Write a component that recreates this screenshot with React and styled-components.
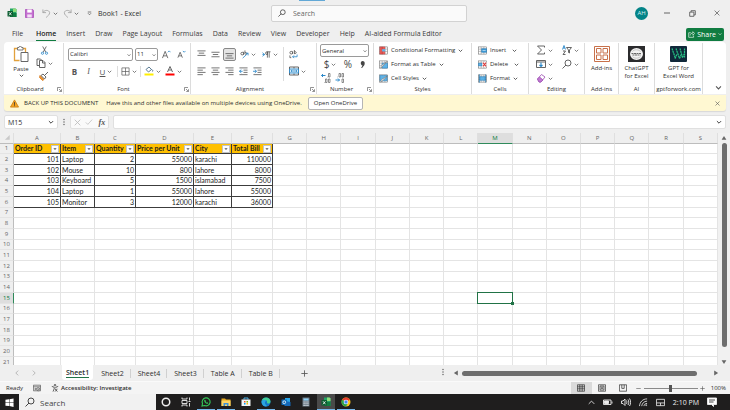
import React, { useState } from 'react';
import styled, { createGlobalStyle, css } from 'styled-components';

const GlobalStyle = createGlobalStyle`
  * {
    box-sizing: border-box;
  }
  body {
    margin: 0;
    background: #efefef;
    color: #2e2e2e;
    font-family: 'Open Sans', 'Noto Sans', sans-serif;
    font-size: 7px;
  }
  button, input, select {
    font: inherit;
    color: inherit;
    margin: 0;
    padding: 0;
    border: 0;
    background: none;
    border-radius: 0;
  }
`;

const HEADERS = ['Order ID', 'Item', 'Quantity', 'Price per Unit', 'City', 'Total Bill'];

const ORDERS = [
    [101, 'Laptop', 2, 55000, 'karachi', 110000],
    [102, 'Mouse', 10, 800, 'lahore', 8000],
    [103, 'Keyboard', 5, 1500, 'islamabad', 7500],
    [104, 'Laptop', 1, 55000, 'lahore', 55000],
    [105, 'Monitor', 3, 12000, 'karachi', 36000],
];

const COLUMNS = 'ABCDEFGHIJKLMNOPQRS'.split('');
const COLUMN_WIDTHS = [47, 34, 41, 58, 38, 41];
const ROWS = Array.from({ length: 21 }, (_, i) => i + 1);
const ACTIVE = { column: 'M', row: 15 };

const MENU = ['File', 'Home', 'Insert', 'Draw', 'Page Layout', 'Formulas', 'Data', 'Review', 'View', 'Developer', 'Help', 'AI-aided Formula Editor'];
const SHEETS = ['Sheet1', 'Sheet2', 'Sheet4', 'Sheet3', 'Table A', 'Table B'];

/* ---------- shell ---------- */

const Window = styled.div`
  height: 100vh;
  display: flex;
  flex-direction: column;
  overflow: hidden;
`;

const TitleBar = styled.header`
  display: grid;
  grid-template-columns: 271px 1fr 263px;
  align-items: center;
  height: 26px;
  flex: none;
  position: relative;

  &::before {
    content: '';
    position: absolute;
    top: 0;
    left: 41%;
    width: 26px;
    height: 1px;
    background: #62a8d6;
  }
`;

const Cluster = styled.div`
  display: flex;
  align-items: center;
  justify-content: ${(p) => p.$justify || 'flex-start'};
  gap: ${(p) => p.$gap || 0}px;
  padding: ${(p) => p.$pad || '0'};
`;

const IconButton = styled.button`
  display: inline-flex;
  align-items: center;
  justify-content: center;
  gap: 2px;
  flex: none;
  min-width: ${(p) => p.$w || 12}px;
  height: ${(p) => p.$h || 12}px;
  color: ${(p) => p.$color || '#555'};
  ${(p) => p.$boxed && css`
    background: #e4e4e4;
    border: 1px solid #888;
    border-radius: 2px;
  `}
`;

const DocTitle = styled.span`
  white-space: nowrap;
`;

const TitleSearch = styled.label`
  display: flex;
  align-items: center;
  gap: 7px;
  height: 17px;
  padding: 0 6px;
  background: #fafafa;
  border: 1px solid #d2d2d2;
  border-radius: 2px;
  input {
    flex: 1;
    outline: none;
  }
  input::placeholder {
    color: #666;
  }
`;

const Avatar = styled.button`
  width: 13px;
  height: 13px;
  border-radius: 50%;
  background: #038387;
  color: #d8f0f0;
  font-size: 6px;
  line-height: 13px;
`;

const MenuBar = styled.nav`
  display: flex;
  align-items: center;
  gap: 10px;
  height: 16px;
  flex: none;
  padding: 0 6px 0 12px;
`;

const MenuLink = styled.a`
  color: #3b3b3b;
  text-decoration: none;
  white-space: nowrap;
  line-height: 12px;
  border-bottom: 1px solid transparent;
  ${(p) => p.$active && css`
    font-weight: 600;
    color: #222;
    margin-left: 3px;
    border-color: #107c41;
  `}
`;

const ShareButton = styled.button`
  display: flex;
  align-items: center;
  gap: 2px;
  height: 13px;
  margin-left: auto;
  padding: 0 2px;
  border-radius: 2px;
  background: #107c41;
  color: #fff;
`;

/* ---------- ribbon ---------- */

const Ribbon = styled.section`
  display: flex;
  flex: none;
  height: 52px;
  margin: 0 4px;
  padding: 1px 0 0;
  background: #fff;
  border-radius: 4px 4px 0 0;
  font-size: 6px;
`;

const Group = styled.div`
  display: flex;
  flex-direction: column;
  flex: none;
  width: ${(p) => p.$width}px;
  border-right: 1px solid #dcdcdc;
`;

const GroupBody = styled.div`
  display: flex;
  flex: 1;
  gap: ${(p) => p.$gap || 0}px;
  padding: ${(p) => p.$pad || '0'};
`;

const GroupLabel = styled.div`
  display: flex;
  align-items: center;
  justify-content: center;
  height: 9px;
  line-height: 9px;
  white-space: nowrap;
  span {
    flex: 1;
    text-align: center;
  }
`;

const CollapseCorner = styled.div`
  flex: 1;
  display: flex;
  align-items: flex-end;
  justify-content: flex-end;
  padding: 0 2px 1px 0;
`;

const Stack = styled.div`
  display: flex;
  flex-direction: column;
  gap: ${(p) => p.$gap || 0}px;
`;

const Line = styled.div`
  display: flex;
  align-items: center;
  gap: ${(p) => p.$gap || 0}px;
  height: ${(p) => p.$h || 14}px;
`;

const Divider = styled.i`
  width: 1px;
  height: ${(p) => p.$h || 11}px;
  background: #dcdcdc;
`;

const BigButton = styled.button`
  display: flex;
  flex-direction: column;
  align-items: center;
  width: 100%;
  line-height: 8px;
  padding-top: 2px;
  white-space: nowrap;
  svg {
    margin-bottom: 2px;
  }
`;

const TextButton = styled.button`
  display: flex;
  align-items: center;
  gap: 3px;
  height: 14px;
  white-space: nowrap;
`;

const SelectBox = styled.span`
  position: relative;
  display: inline-flex;
  width: ${(p) => p.$width}px;
  height: 13px;
  border: 1px solid #9a9a9a;
  border-radius: 2px;
  select {
    appearance: none;
    width: 100%;
    padding: 0 1px;
    outline: none;
  }
  svg {
    position: absolute;
    right: 1px;
    top: 4px;
    pointer-events: none;
  }
`;

const Letter = styled.span`
  font-size: 8px;
  line-height: 9px;
  font-weight: ${(p) => (p.$bold ? 700 : 400)};
  font-style: ${(p) => (p.$italic ? 'italic' : 'normal')};
  font-family: ${(p) => (p.$italic ? "'Liberation Serif', serif" : 'inherit')};
  text-decoration: ${(p) => (p.$underline ? 'underline' : 'none')};
`;

const Symbol = styled.span`
  font-size: 10px;
  line-height: 12px;
  color: #444;
`;

/* ---------- message and formula bars ---------- */

const MessageBar = styled.div`
  display: flex;
  align-items: center;
  flex: none;
  height: 16px;
  margin: 1px 4px 0;
  padding: 0 6px;
  background: #fff8d2;
  border-radius: 0 0 3px 3px;
  box-shadow: 0 1px 1px #d8d8d8;
  font-size: 6px;
  strong {
    font-weight: 500;
    margin: 0 8px 0 5px;
  }
`;

const OutlineButton = styled.button`
  height: 13px;
  margin: 0 auto 0 6px;
  padding: 0 5px;
  background: #fff;
  border: 1px solid #b5b5b5;
  border-radius: 2px;
`;

const FormulaBar = styled.div`
  display: flex;
  align-items: center;
  flex: none;
  gap: 4px;
  padding: 4px;
`;

const Field = styled.label`
  display: flex;
  align-items: center;
  flex: ${(p) => (p.$width ? `0 0 ${p.$width}px` : 1)};
  min-width: 0;
  height: 14px;
  padding: 0 3px;
  background: #fff;
  border: 1px solid #e0e0e0;
  border-radius: 2px;
  input {
    flex: 1;
    min-width: 0;
    outline: none;
  }
`;

const FunctionButtons = styled.div`
  display: flex;
  align-items: center;
  justify-content: space-around;
  width: 39px;
  height: 14px;
  background: #fafafa;
  border: 1px solid #e0e0e0;
  border-radius: 2px;
`;

/* ---------- sheet ---------- */

const SheetArea = styled.main`
  display: flex;
  flex: 1;
  min-height: 0;
`;

const GridView = styled.div`
  flex: 1;
  overflow: hidden;
  background: #fff;
`;

const Grid = styled.table`
  width: 100%;
  table-layout: fixed;
  border-collapse: separate;
  border-spacing: 0;
  font-family: Lato, 'Open Sans', sans-serif;
  font-size: 7px;
  line-height: 9px;
  color: #1c1c1c;

  tbody tr {
    height: 11px;
  }
  tbody tr:nth-child(3n + 1) {
    height: 10px;
  }
`;

const ColumnHead = styled.th`
  height: 11px;
  padding: 0;
  font-weight: 400;
  font-family: 'Open Sans', sans-serif;
  font-size: 6px;
  color: ${(p) => (p.$active ? '#107c41' : '#666')};
  background: ${(p) => (p.$active ? '#dedede' : '#efefef')};
  border-right: 1px solid #dfdfdf;
  border-bottom: 1px solid ${(p) => (p.$active ? '#2f8a5b' : '#bdbdbd')};
`;

const RowHead = styled.th`
  padding: 0;
  font-weight: 400;
  font-family: 'Open Sans', sans-serif;
  font-size: 6px;
  color: ${(p) => (p.$active ? '#107c41' : '#666')};
  background: ${(p) => (p.$active ? '#dedede' : '#efefef')};
  border-right: 1px solid ${(p) => (p.$active ? '#2f8a5b' : '#bdbdbd')};
  border-bottom: 1px solid #e4e4e4;
`;

const Cell = styled.td`
  position: relative;
  padding: 0 1px;
  white-space: nowrap;
  text-align: ${(p) => (p.$number ? 'right' : 'left')};
  border-right: 1px solid #e4e4e4;
  border-bottom: 1px solid #e4e4e4;
  ${(p) => p.$filled && css`
    border-color: #3c3c3c;
  `}
  ${(p) => p.$heading && css`
    background: #ffc000;
    font-weight: 700;
  `}
`;

const HeadingInner = styled.div`
  display: flex;
  align-items: center;
  justify-content: space-between;
  height: 9px;
`;

const FilterButton = styled.button`
  display: flex;
  align-items: center;
  justify-content: center;
  flex: none;
  width: 8px;
  height: 8px;
  margin-left: -2px;
  background: #fdfdfd;
  border: 1px solid #c4c4c4;
`;

const Selection = styled.div`
  position: absolute;
  inset: -1px;
  border: 1px solid #217346;
  z-index: 1;
  &::after {
    content: '';
    position: absolute;
    right: -2px;
    bottom: -2px;
    width: 3px;
    height: 3px;
    background: #217346;
  }
`;

const VerticalScroll = styled.div`
  display: flex;
  flex-direction: column;
  align-items: center;
  justify-content: space-between;
  gap: 2px;
  width: 12px;
  padding: 2px 0 0;
  background: #f1f1f1;
`;

const VerticalThumb = styled.div`
  flex: 1;
  width: 5px;
  margin-bottom: 10px;
  border-radius: 3px;
  background: #6e6e6e;
`;

const SheetBar = styled.div`
  display: flex;
  align-items: center;
  flex: none;
  height: 17px;
  padding-right: 11px;
  background: #efefef;
  border-bottom: 1px solid #fafafa;
`;

const SheetNav = styled.div`
  display: flex;
  justify-content: center;
  gap: 5px;
  width: 62px;
  padding-right: 11px;
`;

const SheetTab = styled.button`
  height: 16px;
  padding: 0 7px;
  white-space: nowrap;
  position: relative;
  &::after {
    content: '';
    position: absolute;
    right: 0;
    top: 4px;
    height: 9px;
    border-right: 1px solid #d0d0d0;
  }
  ${(p) => p.$active && css`
    height: 15px;
    margin: 0 1px 2px 0;
    padding: 0 4px;
    background: #fff;
    border-radius: 0 0 3px 3px;
    font-weight: 600;
    &::after {
      left: 4px;
      right: 4px;
      top: auto;
      bottom: 2px;
      height: 1px;
      border: 0;
      background: #217346;
    }
  `}
`;

const NewSheet = styled.div`
  flex: 1;
  display: flex;
  justify-content: space-between;
  padding-left: 19px;
`;

const HorizontalScroll = styled.div`
  display: flex;
  align-items: center;
  gap: 3px;
  flex: none;
  width: 37%;
  margin-left: 8px;
`;

const HorizontalThumb = styled.div`
  flex: 1;
  height: 5px;
  margin-right: 13px;
  border-radius: 3px;
  background: #6e6e6e;
`;

const StatusBar = styled.footer`
  display: flex;
  align-items: center;
  flex: none;
  gap: 8px;
  height: 12px;
  padding: 0 4px 0 6px;
  background: #f4f4f4;
  font-size: 6px;
`;

const AccessButton = styled.button`
  display: flex;
  align-items: center;
  gap: 2px;
  font-weight: 600;
`;

const StatusRight = styled.div`
  display: flex;
  align-items: center;
  margin-left: auto;
`;

const ViewButton = styled.button`
  display: flex;
  align-items: center;
  justify-content: center;
  width: 21px;
  height: 12px;
  background: ${(p) => (p.$active ? '#dadada' : 'transparent')};
`;

const ZoomSlider = styled.input`
  appearance: none;
  width: 54px;
  height: 10px;
  background: linear-gradient(#8a8a8a, #8a8a8a) center / 100% 1px no-repeat;
  &::-webkit-slider-thumb {
    appearance: none;
    width: 3px;
    height: 7px;
    background: #555;
  }
`;

const Percent = styled.span`
  margin-left: 3px;
`;

/* ---------- taskbar ---------- */

const TaskBar = styled.div`
  display: flex;
  align-items: stretch;
  flex: none;
  height: 16px;
  background: #1f1e1e;
  color: #eee;
`;

const TaskSearch = styled.label`
  display: flex;
  align-items: center;
  gap: 5px;
  width: 137px;
  padding: 0 6px;
  background: #f1f1f1;
  color: #333;
  font-size: 8px;
  input {
    flex: 1;
    min-width: 0;
    outline: none;
  }
  input::placeholder {
    color: #444;
  }
`;

const TaskButton = styled.button`
  display: flex;
  align-items: center;
  justify-content: center;
  width: 20px;
  background: ${(p) => (p.$active ? '#4a4a4a' : 'transparent')};
  background-clip: padding-box;
  border: 0 solid transparent;
  border-width: 0 1px;
  box-shadow: ${(p) => (p.$open ? 'inset 0 -1px #76b9ed' : 'none')};
`;

const StartButton = styled(TaskButton)`
  width: 19px;
  border: 0;
`;

const Tray = styled.div`
  display: flex;
  align-items: center;
  gap: 8px;
  margin-left: auto;
  padding-right: 13px;
`;

/* ---------- icons ---------- */

const Svg = ({ w = 10, h = w, box = 20, children, ...rest }) => (
    <svg width={w} height={h} viewBox={`0 0 ${box} ${Math.round((box * h) / w)}`} fill="none" stroke="currentColor" strokeWidth="1.8" aria-hidden="true" {...rest}>
        {children}
    </svg>
);

const Chevron = ({ w = 5 }) => <Svg w={w} strokeWidth="3"><path d="M3 7l7 7 7-7" /></Svg>;
const Lens = ({ w = 10 }) => <Svg w={w}><circle cx="12" cy="8" r="6" /><path d="M8 12l-7 7" /></Svg>;
const Close = ({ w = 6 }) => <Svg w={w} strokeWidth="2.4"><path d="M2 2l16 16M18 2L2 18" /></Svg>;
const Triangle = ({ turn = 0 }) => (
    <Svg w={6} stroke="none" fill="#666"><path d="M10 3l8 13H2z" transform={`rotate(${turn} 10 10)`} /></Svg>
);
const Launcher = () => <Svg w={5} strokeWidth="2.5"><path d="M2 16V2h14M8 8l9 9M18 9v9H9" /></Svg>;
const ExcelIcon = ({ w = 10 }) => (
    <Svg w={w} stroke="none">
        <path d="M6 1h11l2 2v15H6z" fill="#21a366" />
        <path d="M12 1h5l2 2v5h-7z" fill="#8fdc7a" />
        <path d="M6 10h13v8H6z" fill="#107c41" />
        <rect x="1" y="6" width="11" height="11" rx="1" fill="#0b5c30" />
        <path d="M4 8.5l5 6M9 8.5l-5 6" stroke="#fff" strokeWidth="1.6" />
    </Svg>
);

const AlignIcon = ({ rows, shift }) => (
    <Svg w={9}>
        {rows.map(([x1, x2], i) => <path key={i} d={`M${x1} ${shift + i * 5}H${x2}`} />)}
    </Svg>
);

const IndentIcon = ({ flip }) => (
    <Svg w={9}>
        <path d="M1 2h18M10 7h9M10 12h9M1 17h18" />
        <path d={flip ? 'M0 9.5h7M4 6l4 3.5-4 3.5' : 'M8 9.5H1M5 6L1 9.5 5 13'} stroke="#2b88c9" strokeWidth="2" />
    </Svg>
);

const GridIcon = ({ kind }) => (
    <Svg w={9} strokeWidth="1.2" stroke="#666">
        <rect x="1" y="2" width="18" height="16" fill="#fff" />
        <path d="M1 7h18M1 12h18M7 2v16M13 2v16" stroke="#8a8a8a" />
        {kind === 'conditional' && <><path d="M2 2h5v16H2zM7 2h6v5H7zM7 12h6v6H7z" fill="#e8625c" stroke="#c94040" /><path d="M7 7h7v5H7z" fill="#5eb2e6" stroke="none" /></>}
        {kind === 'table' && <><path d="M7 7h12v11H7z" fill="#5eb2e6" stroke="#2b7fb8" /><path d="M18 3L8 14l-4 4 1-5z" fill="#fff" /></>}
        {kind === 'styles' && <><path d="M2 3h16v12H2z" fill="#5eb2e6" stroke="#2b7fb8" /><path d="M19 4L9 14l-5 4 1-5z" fill="#fff" /></>}
        {kind === 'insert' && <><path d="M8 6h11v8H8z" fill="#3d9bd9" stroke="#2478b0" /><path d="M10 10h7" stroke="#fff" /></>}
        {kind === 'delete' && <><path d="M1 7h8v6H1z" fill="#5eb2e6" stroke="#2478b0" /><path d="M10 5h9v10h-9z" fill="#fff" stroke="none" /><path d="M11 6l7 8M18 6l-7 8" stroke="#d83b3b" strokeWidth="2.5" /></>}
        {kind === 'format' && <><path d="M4 6h12v8H4z" fill="#5eb2e6" stroke="#2478b0" /><path d="M3 1v18M17 1v18" stroke="#2478b0" strokeWidth="1.8" /></>}
    </Svg>
);

const PasteIcon = () => (
    <Svg w={16} h={17} box={32} strokeWidth="2">
        <path d="M10 5H3v24h10M18 5h7v7" stroke="#e2a13c" strokeWidth="2.6" />
        <path d="M9 3h3a2.5 2.5 0 0 1 5 0h3v5H9z" fill="#fff" stroke="#777" />
        <path d="M16 13h14v18H16z" fill="#fff" stroke="#666" />
    </Svg>
);
const CutIcon = () => (
    <Svg w={9}>
        <path d="M6 1l7 13M14 1L7 14" />
        <circle cx="5.5" cy="16" r="2.5" stroke="#2b88c9" /><circle cx="14.5" cy="16" r="2.5" stroke="#2b88c9" />
    </Svg>
);
const CopyIcon = () => <Svg w={10}><path d="M7 15H2V2h7l2 2" /><path d="M7 5h7l4 4v10H7zM13 5v5h5" fill="#fff" /></Svg>;
const BrushIcon = () => (
    <Svg w={10}><path d="M2 9l8 8-3 2-6-6z" fill="#f0932b" stroke="#d9822b" /><path d="M8 6l6 6-3 4-7-7zM12 8l6-6" fill="#fff" /></Svg>
);
const BordersIcon = () => <Svg w={9} strokeWidth="1.5"><path d="M2 2h16v16H2zM10 2v16M2 10h16" /></Svg>;
const FillIcon = () => (
    <Svg w={10}><path d="M4 7l6-5 5 5-6 5zM15 7c3 1 3 3 2 4" stroke="#4a6d88" /><path d="M1 15h18v4H1z" fill="#ffee00" stroke="none" /></Svg>
);
const FontColorIcon = () => (
    <Svg w={10}><path d="M5 12l5-11 5 11M7 8h6" /><path d="M1 15h18v4H1z" fill="#f00" stroke="none" /></Svg>
);
const FontSizeIcon = ({ down }) => (
    <Svg w={9}><path d={down ? 'M2 17L7 5l5 12M4 13h6' : 'M1 18L7 3l6 15M3 13h8'} /><path d={down ? 'M13 2l3 3 3-3' : 'M13 5l3-3 3 3'} stroke="#2b88c9" /></Svg>
);
const OrientIcon = () => (
    <Svg w={9}><circle cx="5" cy="8" r="3" /><path d="M8 4v7M11 1v8M11 6c4-2 5 3 1 4" /><path d="M6 18L18 7M13 7h5v5" stroke="#2b88c9" /></Svg>
);
const DirectionIcon = () => (
    <Svg w={9}><path d="M1 6l5 4-5 4M1 10h5" stroke="#2b88c9" /><path d="M19 4h-8a3 3 0 0 0 0 6h1V4v13M16 4v13" /></Svg>
);
const WrapIcon = () => (
    <Svg w={9}><circle cx="5" cy="6" r="3" /><path d="M8 3v6M12 0v9M12 4c5-2 6 5 0 4M2 12v5h3" /><path d="M18 10v5H8M11 12l-3 3 3 3" stroke="#2b88c9" /></Svg>
);
const MergeIcon = () => (
    <Svg w={10}><path d="M1 2h18v16H1zM10 2v3M10 15v3" /><path d="M1 6h18v8H1z" fill="#d5ebf8" stroke="#2b88c9" /><path d="M4 10h12M6 8l-2 2 2 2M14 8l2 2-2 2" stroke="#2b88c9" strokeWidth="1.4" /></Svg>
);
const DecimalIcon = ({ less }) => (
    <Svg w={10} strokeWidth="1.3">
        <path d={less ? 'M1 14h8M6 11l3 3-3 3' : 'M9 5H1M4 2L1 5l3 3'} stroke="#2b88c9" strokeWidth="2" />
        {less
            ? <path d="M5 8h1M8 1h3v7H8zM14 1h3v7h-3zM14 12h3v7h-3z" />
            : <path d="M12 8h1M15 1h3v7h-3zM6 19h1M9 12h3v7H9zM15 12h3v7h-3z" />}
    </Svg>
);
const SumIcon = () => <Svg w={10}><path d="M17 5V2H3l8 8-8 8h14v-3" /></Svg>;
const FillDownIcon = () => <Svg w={10}><path d="M1 3h18v14H1zM1 6h18" /><path d="M10 7v8M7 12l3 3 3-3" stroke="#2b88c9" strokeWidth="2.2" /></Svg>;
const EraserIcon = () => <Svg w={10}><path d="M3 12l8-9 7 5-8 10H6z" fill="#fff" stroke="#a45cb8" /><path d="M3 12l4-4 7 6-4 4H6z" fill="#c279d3" stroke="#a45cb8" /></Svg>;
const SortIcon = () => (
    <Svg w={10}><path d="M1 9l3-8 3 8M2 6h4" stroke="#2b88c9" /><path d="M2 12h5l-5 7h5M9 5h10l-4 5v6l-2-1v-5z" /></Svg>
);
const AddinsIcon = () => (
    <Svg w={16} box={32} stroke="#c8714a" strokeWidth="2">
        <path d="M1 1h30v30H1z" /><path d="M5 5h9v9H5zM18 5h9v9h-9zM5 18h9v9H5zM18 18h9v9h-9z" />
    </Svg>
);
const ChatIcon = () => (
    <Svg w={17} h={16} box={34} stroke="none">
        <path d="M0 0h34v32H0z" fill="#2b2b2d" />
        <ellipse cx="17" cy="16" rx="13" ry="12" fill="#f2f2f2" />
        <path d="M9 11c4-5 12-4 16 0M9 21c4 5 12 4 16 0" stroke="#b5b5b5" strokeWidth="1.5" />
        <path d="M7 15h20M9 18h16" stroke="#666" strokeWidth="2" strokeDasharray="4 1" />
    </Svg>
);
const GptIcon = () => (
    <Svg w={17} h={16} box={34} stroke="none">
        <rect width="34" height="32" rx="2" fill="#10283a" />
        <path d="M4 5l7 20M12 5l7 20M20 5l5 18M10 25l4-9M19 25l4-9M29 5v18M25 23l4-8" stroke="#27c486" strokeWidth="2.4" strokeDasharray="4 1" />
    </Svg>
);
const SaveIcon = () => (
    <Svg w={9}><path d="M1 1h16l2 2v16H1z" fill="#c46fd0" stroke="#a94fb8" /><path d="M5 1h10v7H5z" fill="#fff" stroke="none" /><path d="M5 12h10v7H5z" fill="#f4dff7" stroke="none" /></Svg>
);
const UndoIcon = ({ flip }) => (
    <Svg w={9} stroke="#a0a0a0"><path d="M2 1v7h7M2 8c4-7 14-6 15 0 0 5-4 7-8 11" transform={flip ? 'translate(20 0) scale(-1 1)' : undefined} /></Svg>
);
const DotsIcon = () => (
    <Svg w={4} h={10} box={8} stroke="none" fill="#666"><circle cx="4" cy="5" r="1.5" /><circle cx="4" cy="10" r="1.5" /><circle cx="4" cy="15" r="1.5" /></Svg>
);

const TASKS = [
    { name: 'Cortana', icon: <Svg w={10} strokeWidth="3"><circle cx="10" cy="10" r="7.5" /></Svg> },
    { name: 'Task View', icon: <Svg w={10}><path d="M2 1v3h10V1M2 7h10v6H2zM2 19v-3h10v3M17 1v6M17 12v7M15 9h4" /></Svg> },
    { name: 'WhatsApp', open: true, icon: <Svg w={10} stroke="#35c759" strokeWidth="2.2"><path d="M2 18l1-5a8 8 0 1 1 4 4z" /><path d="M7 6c-1 4 3 8 7 7l-1-2-2 1-2-3 1-1z" fill="#35c759" strokeWidth="1" /></Svg> },
    { name: 'File Explorer', open: true, icon: <Svg w={10} stroke="none"><path d="M1 3h7l2 2h9v13H1z" fill="#e8a921" /><path d="M1 7h18v11H1z" fill="#ffd666" /><path d="M5 12h10v6h-3v-3H8v3H5z" fill="#3c91d8" /></Svg> },
    { name: 'Store', icon: <Svg w={10} stroke="none"><path d="M6 5V2h8v3" stroke="#4db4ea" strokeWidth="2" /><path d="M1 5h18v13H1z" fill="#f2f5f7" /><path d="M6 8h3v3H6z" fill="#f25022" /><path d="M11 8h3v3h-3z" fill="#7fba00" /><path d="M6 12h3v3H6z" fill="#00a4ef" /><path d="M11 12h3v3h-3z" fill="#ffb900" /></Svg> },
    { name: 'Edge', open: true, icon: <Svg w={10} stroke="none"><circle cx="10" cy="10" r="9" fill="#1276c9" /><path d="M1 9C2-2 19-1 19 9c0 5-7 5-7 2 1-6-8-6-11-2z" fill="#43cf95" /><path d="M1 9c3-5 9-4 9-1-4 2-2 8 3 10C6 21 1 15 1 9z" fill="#2aa5e0" /></Svg> },
    { name: 'Outlook', icon: <Svg w={10} stroke="none"><path d="M8 2h10v8H8z" fill="#29a8ea" /><path d="M7 8l12 2v8H7z" fill="#1568b8" /><rect x="1" y="5" width="11" height="11" rx="1" fill="#0f6cbd" /><circle cx="6.5" cy="10.5" r="2.8" stroke="#fff" strokeWidth="1.6" /></Svg> },
    { name: 'Calculator', icon: <Svg w={10} stroke="none"><path d="M3 1h14v18H3z" fill="#6d7a86" /><path d="M5 3h10v4H5z" fill="#8fd0f5" /><path d="M5 10h10M5 13.5h10M5 17h10" stroke="#d7dee4" strokeWidth="2" strokeDasharray="2.5 1.3" /></Svg> },
    { name: 'Excel', open: true, active: true, icon: <ExcelIcon /> },
    { name: 'Chrome', open: true, icon: <Svg w={10} stroke="none"><circle cx="10" cy="10" r="9" fill="#fbc116" /><path d="M10 10L2.2 5.5A9 9 0 0 1 17.8 5.5z" fill="#e33b2e" /><path d="M10 10L2.2 5.5A9 9 0 0 0 10 19l4-7z" fill="#2da44e" /><circle cx="10" cy="10" r="4.6" fill="#fff" /><circle cx="10" cy="10" r="3.4" fill="#4285f4" /></Svg> },
];

/* ---------- parts ---------- */

function Dropdown({ label, width, options }) {
    return (
        <SelectBox $width={width}>
            <select aria-label={label}>
                {options.map((o) => <option key={o}>{o}</option>)}
            </select>
            <Chevron w={4} />
        </SelectBox>
    );
}

function Tool({ label, w, h, boxed, menu, children }) {
    return (
        <IconButton aria-label={label} $w={w} $h={h} $boxed={boxed}>
            {children}
            {menu && <Chevron />}
        </IconButton>
    );
}

function RibbonGroup({ label, width, pad, gap, launcher, children }) {
    return (
        <Group $width={width}>
            <GroupBody $pad={pad} $gap={gap}>{children}</GroupBody>
            <GroupLabel>
                <span>{label}</span>
                {launcher && <IconButton aria-label={`${label} settings`} $w={7} $h={7}><Launcher /></IconButton>}
            </GroupLabel>
        </Group>
    );
}

function RibbonTools() {
    return (
        <Ribbon>
            <RibbonGroup label="Clipboard" width={60} pad="1px 0 0 9px" gap={5} launcher>
                <div>
                    <BigButton><PasteIcon />Paste<Chevron /></BigButton>
                </div>
                <Stack $gap={1}>
                    <Tool label="Cut"><CutIcon /></Tool>
                    <Tool label="Copy" menu w={20}><CopyIcon /></Tool>
                    <Tool label="Format Painter"><BrushIcon /></Tool>
                </Stack>
            </RibbonGroup>
            <RibbonGroup label="Font" width={127} pad="4px 0 0 4px" launcher>
                <Stack $gap={3}>
                    <Line $gap={2}>
                        <Dropdown label="Font name" width={65} options={['Calibri', 'Arial']} />
                        <Dropdown label="Font size" width={23} options={['11', '12', '14']} />
                        <Tool label="Increase font size" w={13}><FontSizeIcon /></Tool>
                        <Tool label="Decrease font size" w={13}><FontSizeIcon down /></Tool>
                    </Line>
                    <Line $gap={1}>
                        <Tool label="Bold" w={13}><Letter $bold>B</Letter></Tool>
                        <Tool label="Italic" w={13}><Letter $italic>I</Letter></Tool>
                        <Tool label="Underline" menu w={20}><Letter $underline>U</Letter></Tool>
                        <Divider />
                        <Tool label="Borders" menu w={20}><BordersIcon /></Tool>
                        <Divider />
                        <Tool label="Fill color" menu w={20}><FillIcon /></Tool>
                        <Tool label="Font color" menu w={20}><FontColorIcon /></Tool>
                    </Line>
                </Stack>
            </RibbonGroup>
            <RibbonGroup label="Alignment" width={126} pad="4px 0 0 4px" gap={3} launcher>
                <Stack $gap={3}>
                    <Line $gap={2}>
                        <Tool label="Top align"><AlignIcon rows={[[1, 19], [4, 16], [1, 19]]} shift={2} /></Tool>
                        <Tool label="Middle align"><AlignIcon rows={[[1, 19], [4, 16], [1, 19]]} shift={5} /></Tool>
                        <Tool label="Bottom align" boxed w={13} h={13}><AlignIcon rows={[[1, 19], [4, 16], [1, 19]]} shift={8} /></Tool>
                        <Tool label="Orientation" menu w={20}><OrientIcon /></Tool>
                        <Tool label="Text direction" menu w={20}><DirectionIcon /></Tool>
                    </Line>
                    <Line $gap={2}>
                        <Tool label="Align left"><AlignIcon rows={[[1, 19], [1, 13], [1, 19], [1, 13]]} shift={2} /></Tool>
                        <Tool label="Center"><AlignIcon rows={[[1, 19], [4, 16], [1, 19], [4, 16]]} shift={2} /></Tool>
                        <Tool label="Align right"><AlignIcon rows={[[1, 19], [7, 19], [1, 19], [7, 19]]} shift={2} /></Tool>
                        <Tool label="Decrease indent"><IndentIcon /></Tool>
                        <Tool label="Increase indent"><IndentIcon flip /></Tool>
                    </Line>
                </Stack>
                <Divider $h={34} />
                <Stack $gap={3}>
                    <Line><Tool label="Wrap text"><WrapIcon /></Tool></Line>
                    <Line><Tool label="Merge and center" menu w={20}><MergeIcon /></Tool></Line>
                </Stack>
            </RibbonGroup>
            <RibbonGroup label="Number" width={57} pad="1px 0 0 3px" launcher>
                <Stack>
                    <Dropdown label="Number format" width={49} options={['General', 'Number', 'Currency']} />
                    <Line>
                        <Tool label="Currency" menu w={20}><Symbol>$</Symbol></Tool>
                        <Tool label="Percent" w={16}><Symbol>%</Symbol></Tool>
                        <Tool label="Comma style"><Svg w={9} stroke="none" fill="#444"><path d="M10 2c6 0 6 7 3 11l-4 5H7l3-6C5 11 5 2 10 2z" /></Svg></Tool>
                    </Line>
                    <Line $gap={2} $h={13}>
                        <Tool label="Increase decimal"><DecimalIcon /></Tool>
                        <Tool label="Decrease decimal"><DecimalIcon less /></Tool>
                    </Line>
                </Stack>
            </RibbonGroup>
            <RibbonGroup label="Styles" width={98} pad="0 0 0 5px">
                <Stack>
                    <TextButton><GridIcon kind="conditional" />Conditional Formatting<Chevron /></TextButton>
                    <TextButton><GridIcon kind="table" />Format as Table<Chevron /></TextButton>
                    <TextButton><GridIcon kind="styles" />Cell Styles<Chevron /></TextButton>
                </Stack>
            </RibbonGroup>
            <RibbonGroup label="Cells" width={57} pad="0 0 0 6px">
                <Stack>
                    <TextButton><GridIcon kind="insert" />Insert<span /><Chevron /></TextButton>
                    <TextButton><GridIcon kind="delete" />Delete<span /><Chevron /></TextButton>
                    <TextButton><GridIcon kind="format" />Format<Chevron /></TextButton>
                </Stack>
            </RibbonGroup>
            <RibbonGroup label="Editing" width={56} pad="1px 0 0 5px" gap={6}>
                <Stack $gap={2}>
                    <Tool label="AutoSum" menu w={20}><SumIcon /></Tool>
                    <Tool label="Fill" menu w={20}><FillDownIcon /></Tool>
                    <Tool label="Clear" menu w={20}><EraserIcon /></Tool>
                </Stack>
                <Stack $gap={2}>
                    <Tool label="Sort and filter" menu w={20}><SortIcon /></Tool>
                    <Tool label="Find and select" menu w={20}><Lens /></Tool>
                </Stack>
            </RibbonGroup>
            <RibbonGroup label="Add-ins" width={34} pad="1px 0 0">
                <BigButton><AddinsIcon />Add-ins</BigButton>
            </RibbonGroup>
            <RibbonGroup label="AI" width={36} pad="1px 0 0">
                <BigButton><ChatIcon />ChatGPT<span>for Excel</span></BigButton>
            </RibbonGroup>
            <RibbonGroup label="gptforwork.com" width={48} pad="1px 0 0">
                <BigButton><GptIcon />GPT for<span>Excel Word</span></BigButton>
            </RibbonGroup>
            <CollapseCorner>
                <Tool label="Collapse ribbon"><Chevron w={7} /></Tool>
            </CollapseCorner>
        </Ribbon>
    );
}

function Worksheet() {
    return (
        <Grid>
            <colgroup>
                <col width="14" />
                {COLUMNS.map((c, i) => <col key={c} width={COLUMN_WIDTHS[i]} />)}
            </colgroup>
            <thead>
                <tr>
                    <ColumnHead aria-label="Select all"><Svg w={6} stroke="none" fill="#c9c9c9"><path d="M19 3v16H3z" /></Svg></ColumnHead>
                    {COLUMNS.map((c) => <ColumnHead key={c} scope="col" $active={c === ACTIVE.column}>{c}</ColumnHead>)}
                </tr>
            </thead>
            <tbody>
                {ROWS.map((row) => (
                    <tr key={row}>
                        <RowHead scope="row" $active={row === ACTIVE.row}>{row}</RowHead>
                        {COLUMNS.map((c, i) => {
                            if (row === 1 && i < HEADERS.length) {
                                return (
                                    <Cell key={c} $filled $heading>
                                        <HeadingInner>
                                            {HEADERS[i]}
                                            <FilterButton aria-label={`Filter ${HEADERS[i]}`}>
                                                <Svg w={4} stroke="none" fill="#555"><path d="M2 6h16l-8 9z" /></Svg>
                                            </FilterButton>
                                        </HeadingInner>
                                    </Cell>
                                );
                            }
                            const order = ORDERS[row - 2];
                            const value = order && order[i];
                            return (
                                <Cell key={c} $filled={value !== undefined} $number={typeof value === 'number'}>
                                    {value}
                                    {row === ACTIVE.row && c === ACTIVE.column && <Selection />}
                                </Cell>
                            );
                        })}
                    </tr>
                ))}
            </tbody>
        </Grid>
    );
}

function App() {
    const [zoom, setZoom] = useState(50);
    const [sheet, setSheet] = useState('Sheet1');

    return (
        <Window>
            <GlobalStyle />
            <TitleBar>
                <Cluster $pad="0 0 0 7px" $gap={3}>
                    <ExcelIcon />
                    <Tool label="Save" w={18}><SaveIcon /></Tool>
                    <Tool label="Undo" menu w={18}><UndoIcon /></Tool>
                    <Tool label="Redo" menu w={18}><UndoIcon flip /></Tool>
                    <Tool label="Customize toolbar"><Svg w={5} strokeWidth="3"><path d="M3 4h14M4 9l6 6 6-6" /></Svg></Tool>
                    <DocTitle>Book1 - Excel</DocTitle>
                </Cluster>
                <TitleSearch>
                    <Lens w={8} />
                    <input type="text" placeholder="Search" aria-label="Search" />
                </TitleSearch>
                <Cluster $justify="flex-end" $gap={13} $pad="0 7px 0 0">
                    <Avatar>AH</Avatar>
                    <Tool label="Minimize"><Svg w={6} strokeWidth="3"><path d="M0 10h20" /></Svg></Tool>
                    <Tool label="Restore"><Svg w={7} strokeWidth="2.4"><path d="M2 6h12v12H2zM6 6V2h12v12h-4" /></Svg></Tool>
                    <Tool label="Close"><Close /></Tool>
                </Cluster>
            </TitleBar>
            <MenuBar>
                {MENU.map((m) => <MenuLink key={m} href="#" $active={m === 'Home'}>{m}</MenuLink>)}
                <ShareButton>
                    <Svg w={7}><path d="M8 5H2v13h14v-5M6 13c0-5 4-7 8-7V2l5 5-5 5V9" /></Svg>
                    Share
                    <Chevron w={4} />
                </ShareButton>
            </MenuBar>
            <RibbonTools />
            <MessageBar>
                <Svg w={9}><path d="M10 2l9 16H1z" fill="#f6a623" stroke="#c97b14" /><path d="M10 7v6M10 14v2" stroke="#333" /></Svg>
                <strong>BACK UP THIS DOCUMENT</strong>
                Have this and other files available on multiple devices using OneDrive.
                <OutlineButton>Open OneDrive</OutlineButton>
                <IconButton aria-label="Dismiss message" $w={6}><Close w={5} /></IconButton>
            </MessageBar>
            <FormulaBar>
                <Field $width={54}>
                    <input type="text" aria-label="Name box" defaultValue="M15" />
                    <Chevron w={6} />
                </Field>
                <DotsIcon />
                <FunctionButtons>
                    <IconButton aria-label="Cancel" $color="#bbb" $w={8}><Close w={7} /></IconButton>
                    <IconButton aria-label="Enter" $color="#bbb" $w={8}><Svg w={8}><path d="M2 11l5 5L18 4" /></Svg></IconButton>
                    <IconButton aria-label="Insert function" $w={8}><Letter $italic $bold>fx</Letter></IconButton>
                </FunctionButtons>
                <Field>
                    <input type="text" aria-label="Formula" />
                    <Chevron w={6} />
                </Field>
            </FormulaBar>
            <SheetArea>
                <GridView><Worksheet /></GridView>
                <VerticalScroll>
                    <Triangle />
                    <VerticalThumb />
                    <Triangle turn={180} />
                </VerticalScroll>
            </SheetArea>
            <SheetBar>
                <SheetNav>
                    <IconButton aria-label="Previous sheet" $color="#888"><Svg w={6}><path d="M14 2l-8 8 8 8" /></Svg></IconButton>
                    <IconButton aria-label="Next sheet" $color="#888"><Svg w={6}><path d="M6 2l8 8-8 8" /></Svg></IconButton>
                </SheetNav>
                {SHEETS.map((s) => (
                    <SheetTab key={s} $active={s === sheet} onClick={() => setSheet(s)}>{s}</SheetTab>
                ))}
                <NewSheet>
                    <Tool label="New sheet"><Svg w={7} strokeWidth="2.4"><path d="M10 1v18M1 10h18" /></Svg></Tool>
                    <DotsIcon />
                </NewSheet>
                <HorizontalScroll>
                    <Triangle turn={270} />
                    <HorizontalThumb />
                    <Triangle turn={90} />
                </HorizontalScroll>
            </SheetBar>
            <StatusBar>
                <span>Ready</span>
                <Tool label="Record macro"><Svg w={8}><path d="M1 3h18v14H1zM1 7h18M4 11h5M4 14h4" /><circle cx="13" cy="13" r="4" fill="#f4f4f4" /><circle cx="13" cy="13" r="1" /></Svg></Tool>
                <AccessButton>
                    <Svg w={8}><circle cx="10" cy="3" r="2" /><path d="M2 6l6 2v4l-3 7M18 6l-6 2v3M10 12l6 7M16 12l-6 7" /></Svg>
                    Accessibility: Investigate
                </AccessButton>
                <StatusRight>
                    <ViewButton $active aria-label="Normal view"><Svg w={8}><path d="M1 2h18v16H1zM1 7h18M1 12h18M7 2v16M13 2v16" /></Svg></ViewButton>
                    <ViewButton aria-label="Page layout view"><Svg w={8}><path d="M1 2h18v16H1zM5 5h10v10H5zM7 8h6M7 11h6" /></Svg></ViewButton>
                    <ViewButton aria-label="Page break view"><Svg w={8}><path d="M1 2h18v16H1zM7 2v9h6V2" /></Svg></ViewButton>
                    <Tool label="Zoom out" w={10}><Svg w={5} strokeWidth="2.4"><path d="M1 10h18" /></Svg></Tool>
                    <ZoomSlider type="range" aria-label="Zoom" value={zoom} onChange={(e) => setZoom(e.target.value)} />
                    <Tool label="Zoom in" w={10}><Svg w={5} strokeWidth="2.4"><path d="M1 10h18M10 1v18" /></Svg></Tool>
                    <Percent>100%</Percent>
                </StatusRight>
            </StatusBar>
            <TaskBar>
                <StartButton aria-label="Start"><Svg w={9} stroke="none" fill="#fff"><path d="M1 4l8-1v7H1zM10 3l9-2v9h-9zM1 11h8v7l-8-1zM10 11h9v9l-9-2z" /></Svg></StartButton>
                <TaskSearch>
                    <Lens />
                    <input type="text" placeholder="Search" aria-label="Search the computer" />
                </TaskSearch>
                {TASKS.map((t) => (
                    <TaskButton key={t.name} aria-label={t.name} $open={t.open} $active={t.active}>{t.icon}</TaskButton>
                ))}
                <Tray>
                    <Svg w={7} strokeWidth="2.4"><path d="M2 14l8-8 8 8" /></Svg>
                    <Svg w={10}><path d="M1 6h15v9H1zM18 9v4" /><path d="M3 8h8v5H3z" fill="currentColor" /></Svg>
                    <Svg w={10}><path d="M1 8h3l4-4v13l-4-4H1zM11 7c1 2 1 5 0 7M14 5c2 3 2 8 0 11M17 3c3 4 3 11 0 15" /></Svg>
                    <Svg w={9}><path d="M1 18C2 9 8 2 18 2M6 18c1-6 5-11 12-11M11 18c0-3 3-6 7-6" /><circle cx="16" cy="16" r="1" /></Svg>
                    <Svg w={9}><path d="M1 3h18v14H1zM1 11h18M10 11v6" /></Svg>
                    <time>2:10 PM</time>
                    <Svg w={10}><path d="M1 2h18v13h-6v4l-4-4H1z" fill="#fff" /><path d="M4 6h12M4 10h9" stroke="#333" /></Svg>
                </Tray>
            </TaskBar>
        </Window>
    );
}

export default App;
